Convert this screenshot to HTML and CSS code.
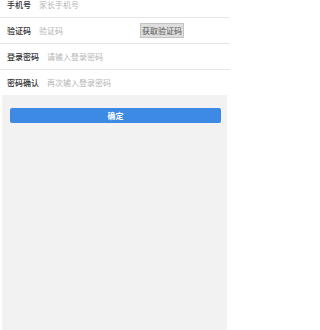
FILE: index.html
```html
<!DOCTYPE html>
<html lang="zh-CN">
<head>
<meta charset="utf-8">
<meta name="viewport" content="width=230">
<title>注册</title>
<link rel="stylesheet" href="styles.css">
</head>
<body>
<div class="page">
  <div class="form">
    <div class="row first">
      <label class="label">手机号</label>
      <input class="field" type="text" placeholder="家长手机号">
    </div>
    <div class="row">
      <label class="label">验证码</label>
      <input class="field" type="text" placeholder="验证码">
      <button class="code-btn" type="button">获取验证码</button>
    </div>
    <div class="row">
      <label class="label">登录密码</label>
      <input class="field" type="password" placeholder="请输入登录密码">
    </div>
    <div class="row last">
      <label class="label">密码确认</label>
      <input class="field" type="password" placeholder="再次输入登录密码">
    </div>
  </div>
  <div class="footer">
    <button class="submit" type="button">确定</button>
  </div>
</div>
</body>
</html>
```
FILE: styles.css
```css
html, body {
  margin: 0;
  padding: 0;
  background: #ffffff;
  font-family: "Noto Sans CJK SC", "Noto Sans", sans-serif;
}
.page {
  display: flex;
  flex-direction: column;
  width: 230px;
  min-height: 100vh;
  overflow: hidden;
}
.form {
  margin-top: -8px;
  background: #ffffff;
}
.row {
  display: flex;
  align-items: center;
  gap: 8px;
  height: 25px;
  padding: 0 46px 0 7px;
  border-bottom: 1px solid #e6e6e6;
}
.row.last {
  border-bottom: none;
}
.label {
  font-size: 8px;
  line-height: 10px;
  color: #2e2e2e;
  font-weight: 500;
  white-space: nowrap;
}
.field {
  flex: 1;
  min-width: 0;
  border: none;
  outline: none;
  padding: 0;
  margin: 0;
  background: transparent;
  font-family: inherit;
  font-size: 8px;
  line-height: 10px;
  color: #333333;
}
.field::placeholder {
  color: #b4b4b4;
}
.code-btn {
  flex: none;
  height: 15px;
  padding: 0 1px;
  margin: 0;
  border: 1px solid #c4c4c4;
  background: #dedede;
  color: #555555;
  font-family: inherit;
  font-size: 8px;
  line-height: 12px;
}
.footer {
  flex: 1;
  margin: 0 3px 0 2px;
  background: #f2f2f2;
  padding: 13px 6px 0 8px;
}
.submit {
  display: block;
  width: 100%;
  height: 15px;
  margin: 0;
  padding: 0;
  border: none;
  border-radius: 2px;
  background: #3d8ae4;
  color: #ffffff;
  font-family: inherit;
  font-size: 8px;
  font-weight: bold;
  line-height: 15px;
}
```
